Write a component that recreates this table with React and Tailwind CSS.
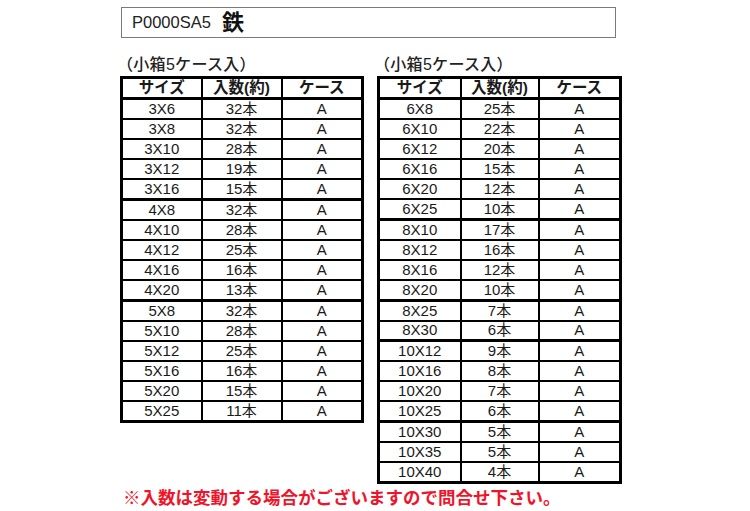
import React from 'react';

const left = [
  ['3X6', '32本'], ['3X8', '32本'], ['3X10', '28本'], ['3X12', '19本'], ['3X16', '15本'],
  ['4X8', '32本', 1], ['4X10', '28本'], ['4X12', '25本'], ['4X16', '16本'], ['4X20', '13本'],
  ['5X8', '32本', 1], ['5X10', '28本'], ['5X12', '25本'], ['5X16', '16本'], ['5X20', '15本'], ['5X25', '11本'],
];

const right = [
  ['6X8', '25本'], ['6X10', '22本'], ['6X12', '20本'], ['6X16', '15本'], ['6X20', '12本'], ['6X25', '10本'],
  ['8X10', '17本', 1], ['8X12', '16本'], ['8X16', '12本'], ['8X20', '10本'],
  ['8X25', '7本', 1], ['8X30', '6本'],
  ['10X12', '9本', 1], ['10X16', '8本'], ['10X20', '7本'], ['10X25', '6本'],
  ['10X30', '5本', 1], ['10X35', '5本'], ['10X40', '4本'],
];

const font = { fontFamily: '"Liberation Sans", "Noto Sans CJK JP", sans-serif' };

function SizeTable({ rows, cols }) {
  return (
    <div>
      <div className="-ml-[3px] text-[16px] font-medium tracking-[0.3px] leading-[20px] text-[#222] mb-[1px]">（小箱5ケース入）</div>
      <table className="table-fixed border-collapse border-[3px] border-black text-[15px] text-[#1a1a1a]">
        <colgroup>
          {cols.map((w, i) => <col key={i} style={{ width: w }} />)}
        </colgroup>
        <thead>
          <tr className="h-[20px] border-b-[3px] border-black">
            {['サイズ', '入数(約)', 'ケース'].map((h) => (
              <th key={h} className="border-x-2 border-black p-0 font-bold text-[15.5px] leading-[18px]">{h}</th>
            ))}
          </tr>
        </thead>
        <tbody>
          {rows.map(([s, n, g]) => (
            <tr key={s} className={`${g ? 'border-t-[3px]' : 'border-t-2'} border-black h-[20.2px]`}>
              <td className="border-x-2 border-black p-0 text-center leading-[16px]">{s}</td>
              <td className="border-x-2 border-black p-0 text-center leading-[16px]">{n}</td>
              <td className="border-x-2 border-black p-0 text-center leading-[16px]">A</td>
            </tr>
          ))}
        </tbody>
      </table>
    </div>
  );
}

export default function App() {
  return (
    <div className="w-[750px] h-[511px] bg-white overflow-hidden" style={font}>
      <div className="ml-[121px] mt-[7px] w-[495px] h-[31px] border border-[#7a7a7a] flex items-center pl-[10px] gap-[11px]">
        <span className="text-[16.5px] text-[#222]">P0000SA5</span>
        <span className="text-[22px] font-bold leading-[24px] text-[#111]">鉄</span>
      </div>
      <div className="flex items-start ml-[120px] mt-[17px] gap-[13px]">
        <SizeTable rows={left} cols={[80, 80, 81]} />
        <SizeTable rows={right} cols={[82, 78, 82]} />
      </div>
      <div className="ml-[123px] mt-[3px] text-[17.5px] font-bold leading-[22px] text-[#f0142a]">
        ※入数は変動する場合がございますので問合せ下さい。
      </div>
    </div>
  );
}
